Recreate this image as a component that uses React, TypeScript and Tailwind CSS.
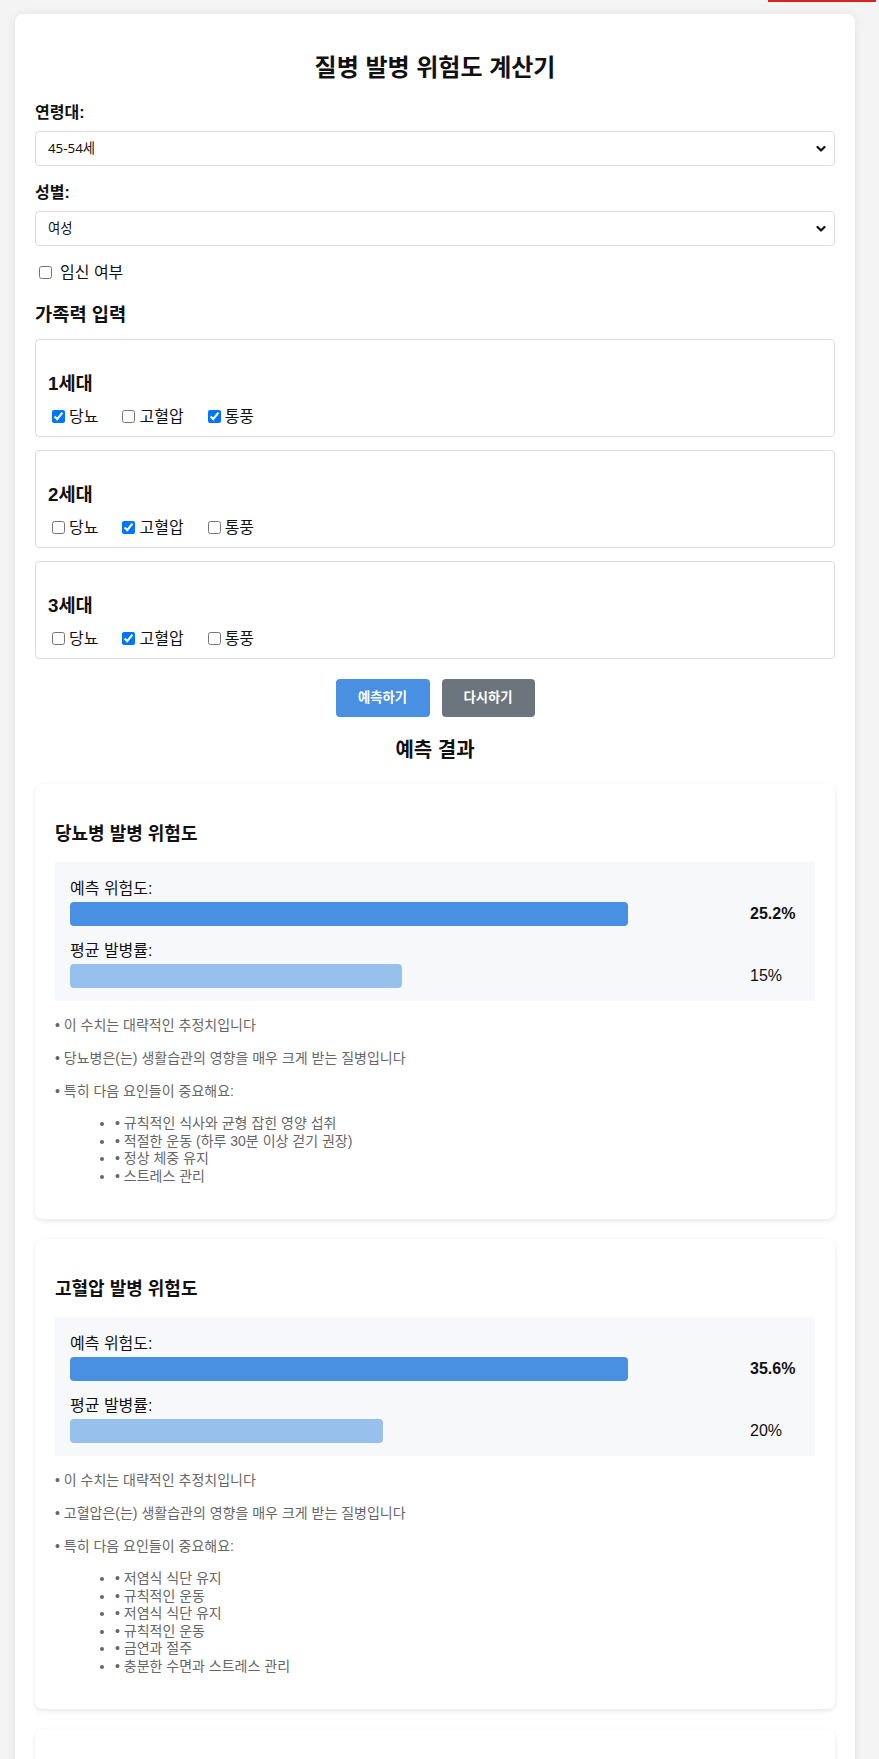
import React from 'react'

interface Risk {
  name: string
  predicted: number
  average: number
  tips: string[]
}

const risks: Risk[] = [
  {
    name: '당뇨병',
    predicted: 25.2,
    average: 15,
    tips: ['규칙적인 식사와 균형 잡힌 영양 섭취', '적절한 운동 (하루 30분 이상 걷기 권장)', '정상 체중 유지', '스트레스 관리'],
  },
  {
    name: '고혈압',
    predicted: 35.6,
    average: 20,
    tips: ['저염식 식단 유지', '규칙적인 운동', '저염식 식단 유지', '규칙적인 운동', '금연과 절주', '충분한 수면과 스트레스 관리'],
  },
  {
    name: '통풍',
    predicted: 8.4,
    average: 5,
    tips: ['퓨린이 많은 음식 줄이기', '충분한 수분 섭취', '금주'],
  },
]

const generations = [
  { label: '1세대', checked: [true, false, true] },
  { label: '2세대', checked: [false, true, false] },
  { label: '3세대', checked: [false, true, false] },
]

const diseases = ['당뇨', '고혈압', '통풍']

function Chevron() {
  return (
    <svg className="pointer-events-none absolute right-[9px] top-1/2 -translate-y-1/2" width="10" height="7" viewBox="0 0 10 7">
      <path d="M1.5 1.5 L5 5 L8.5 1.5" fill="none" stroke="#111" strokeWidth="2.2" strokeLinecap="round" strokeLinejoin="round" />
    </svg>
  )
}

function SelectField({ label, value }: { label: string; value: string }) {
  return (
    <div className="mb-[15px]">
      <label className="mb-[6px] block text-[16px] font-bold leading-[24px]">{label}</label>
      <div className="relative">
        <select
          defaultValue={value}
          className="block h-[35px] w-full appearance-none rounded-[4px] border border-[#dcdcdc] bg-white pl-[12px] font-['Noto_Sans','Noto_Sans_CJK_KR',sans-serif] text-[13.33px] text-[#111]"
        >
          <option>{value}</option>
        </select>
        <Chevron />
      </div>
    </div>
  )
}

function Bar({ label, value, max, bold, color }: { label: string; value: number; max: number; bold?: boolean; color: string }) {
  return (
    <div>
      <div className="mb-[2px] text-[16px] leading-[22px]">{label}</div>
      <div className="flex items-center">
        <div className="w-[558px]">
          <div className={`h-[24px] rounded-[4px] ${color}`} style={{ width: `${(value / max) * 100}%` }} />
        </div>
        <span className={`ml-auto w-[50px] text-[16px] ${bold ? 'font-bold' : ''}`}>{value}%</span>
      </div>
    </div>
  )
}

function ResultCard({ risk }: { risk: Risk }) {
  const max = Math.max(risk.predicted, risk.average)
  return (
    <div className="mb-[20px] rounded-[8px] bg-white px-[20px] pt-[20px] pb-[20px] shadow-[0_2px_5px_rgba(0,0,0,0.1)]">
      <h3 className="mt-[17px] mb-[15px] text-[18px] font-bold leading-[26px]">{risk.name} 발병 위험도</h3>
      <div className="flex flex-col gap-[14px] bg-[#f7f8fa] px-[15px] pt-[16px] pb-[13px]">
        <Bar label="예측 위험도:" value={risk.predicted} max={max} bold color="bg-[#4a90e2]" />
        <Bar label="평균 발병률:" value={risk.average} max={max} color="bg-[#98c0ec]" />
      </div>
      <div className="mt-[15px] text-[14px] leading-[19px] text-[#666]">
        <p className="mb-[14px]">• 이 수치는 대략적인 추정치입니다</p>
        <p className="mb-[14px]">• {risk.name}은(는) 생활습관의 영향을 매우 크게 받는 질병입니다</p>
        <p className="mb-[14px]">• 특히 다음 요인들이 중요해요:</p>
        <ul className="mb-[14px] list-disc pl-[60px] leading-[17.5px]">
          {risk.tips.map((t, i) => (
            <li key={i}>• {t}</li>
          ))}
        </ul>
      </div>
    </div>
  )
}

export default function App() {
  return (
    <div className="min-h-screen bg-[#f4f4f4] pt-[14px] pb-[20px] font-['Liberation_Sans','Noto_Sans_CJK_KR',sans-serif] text-[#111]">
      <div className="fixed top-0 right-[3px] h-[2px] w-[108px] bg-[#d9251d]" />
      <div className="ml-[15px] w-[840px] rounded-[8px] bg-white px-[20px] pt-[20px] pb-[20px] shadow-[0_0_10px_rgba(0,0,0,0.08)]">
        <h1 className="mt-[16px] mb-[16px] text-center text-[24px] font-bold leading-[35px]">질병 발병 위험도 계산기</h1>

        <SelectField label="연령대:" value="45-54세" />
        <SelectField label="성별:" value="여성" />

        <label className="flex items-center text-[16px] leading-[23px]">
          <input type="checkbox" className="mr-[8px] ml-[4px] h-[13px] w-[13px]" />
          임신 여부
        </label>

        <h3 className="mt-[17px] mb-[11px] text-[18.72px] font-bold leading-[27px]">가족력 입력</h3>

        {generations.map((g) => (
          <div key={g.label} className="mb-[13px] rounded-[4px] border border-[#dcdcdc] px-[12px] pt-[12px] pb-[8px]">
            <h4 className="mt-[18px] mb-[8px] text-[18.72px] font-bold leading-[27px]">{g.label}</h4>
            <div className="flex items-center text-[16px] leading-[23px]">
              {diseases.map((d, i) => (
                <label key={d} className="mr-[20px] flex items-center">
                  <input type="checkbox" defaultChecked={g.checked[i]} className="mr-[4px] ml-[4px] h-[13px] w-[13px]" />
                  {d}
                </label>
              ))}
            </div>
          </div>
        ))}

        <div className="mt-[20px] flex justify-center gap-[12px]">
          <button className="h-[38px] w-[94px] rounded-[4px] bg-[#4a90e2] text-[13.33px] font-bold text-white">예측하기</button>
          <button className="h-[38px] w-[93px] rounded-[4px] bg-[#6c757d] text-[13.33px] font-bold text-white">다시하기</button>
        </div>

        <h2 className="mt-[19px] mb-[19px] text-center text-[20px] font-bold leading-[29px]">예측 결과</h2>

        {risks.map((r) => (
          <ResultCard key={r.name} risk={r} />
        ))}
      </div>
    </div>
  )
}
